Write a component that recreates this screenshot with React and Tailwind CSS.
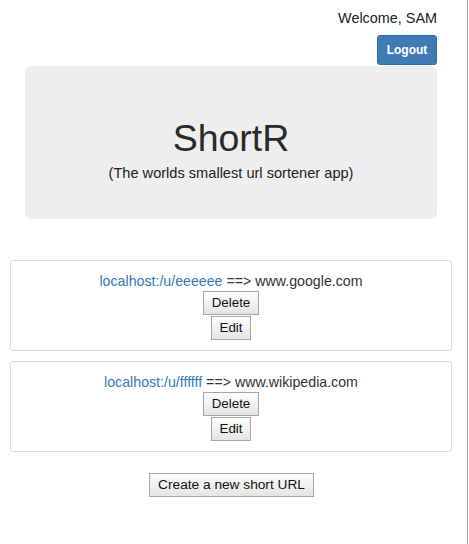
import React from "react";

const font = { fontFamily: '"Liberation Sans", Arial, Helvetica, sans-serif' };

function GrayButton({ children, className = "" }) {
  return (
    <button
      className={
        "h-[24px] border border-[#a6a6a6] bg-gradient-to-b from-[#fdfdfd] to-[#e4e4e4] px-[8px] leading-[16px] text-[#111] " +
        className
      }
    >
      {children}
    </button>
  );
}

function LinkCard({ code, target, className = "" }) {
  return (
    <div
      className={
        "flex flex-col items-center rounded-[3px] border border-[#dddddd] pt-[10px] pb-[10px] " +
        className
      }
    >
      <div className="text-[14.2px] leading-[20px] text-[#333]">
        <a className="text-[#337ab7]" href="#">
          localhost:/u/{code}
        </a>{" "}
        ==&gt; {target}
      </div>
      <GrayButton className="text-[13.33px]">Delete</GrayButton>
      <GrayButton className="mt-[1px] text-[13.33px]">Edit</GrayButton>
    </div>
  );
}

export default function App() {
  return (
    <div className="flex w-[469px] min-h-[544px] bg-white" style={font}>
      <div className="flex w-[467px] flex-col">
        <div className="flex flex-col items-end pl-[25px] pr-[30px] pt-[8px]">
          <div className="text-[14.4px] leading-[20px] text-[#222]">Welcome, SAM</div>
          <button className="mt-[7px] h-[30px] w-[60px] rounded-[3px] border border-[#2e6da4] bg-[#3f7bb5] text-[12px] font-bold text-white">
            Logout
          </button>
        </div>
        <div className="mx-[25px] mr-[30px] mt-px flex flex-col items-center rounded-[6px] bg-[#eeeeee] pt-[52px] pb-[36px] text-[#333]">
          <h1 className="text-[37.5px] leading-[40px] text-[#2a2a2a]">ShortR</h1>
          <div className="mt-[5px] text-[14.6px] leading-[20px] text-[#222]">
            (The worlds smallest url sortener app)
          </div>
        </div>
        <div className="ml-[10px] mr-[15px] mt-[41px] flex flex-col">
          <LinkCard code="eeeeee" target="www.google.com" />
          <LinkCard code="ffffff" target="www.wikipedia.com" className="mt-[10px]" />
        </div>
        <div className="mt-[21px] flex justify-center">
          <GrayButton className="mr-[4px] text-[13.7px]">Create a new short URL</GrayButton>
        </div>
      </div>
      <div className="w-px bg-[#9a9a9a]" />
      <div className="w-px bg-white" />
    </div>
  );
}
